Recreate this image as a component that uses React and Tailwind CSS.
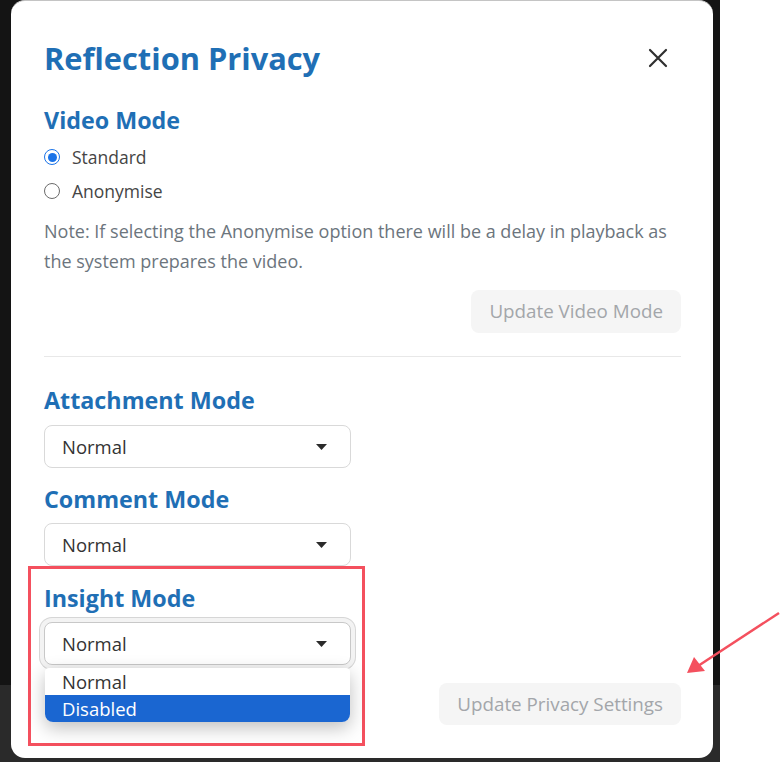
import React from 'react';

const Caret = () => (
  <svg width="11" height="6" viewBox="0 0 11 6" className="shrink-0">
    <path d="M0 0h11L5.5 6z" fill="#2b2b2b" />
  </svg>
);

const SelectBox = ({ value, focused = false }) => (
  <div
    className={`flex h-[43px] w-[307px] items-center justify-between rounded-lg border bg-white pl-[17px] pr-[23px] text-[18.5px] text-[#333] ${
      focused
        ? 'border-[#c8c8c8] shadow-[0_0_0_4px_#f3f3f3,0_0_0_5px_#d6d6d6]'
        : 'border-[#d9d9d9]'
    }`}
  >
    <span>{value}</span>
    <Caret />
  </div>
);

const Radio = ({ checked, label }) => (
  <label className="flex h-[34px] items-center gap-[12px] text-[17.5px] text-[#454545]">
    {checked ? (
      <span className="flex h-[16px] w-[16px] items-center justify-center rounded-full border border-[#1a73e8] bg-white">
        <span className="h-[9px] w-[9px] rounded-full bg-[#1a73e8]" />
      </span>
    ) : (
      <span className="h-[16px] w-[16px] rounded-full border border-[#6b6b6b] bg-white" />
    )}
    {label}
  </label>
);

const Heading = ({ children, className = '' }) => (
  <h3 className={`h-[30px] text-[23.3px] font-bold leading-[30px] text-[#1f6fb5] ${className}`}>
    {children}
  </h3>
);

export default function App() {
  return (
    <div
      className="relative h-[762px] w-[783px] overflow-hidden bg-white"
      style={{ fontFamily: '"Open Sans", "Noto Sans", sans-serif' }}
    >
      {/* backdrop behind the modal */}
      <div className="flex h-full w-[720px] flex-col">
        <div className="h-[685px] bg-[#141414]" />
        <div className="flex-1 bg-[#2a2a2a]" />
      </div>

      {/* modal */}
      <div className="absolute left-[11px] top-0 h-[758px] w-[702px] rounded-[14px] border-t border-[#c4c4c4] bg-white pl-[33px] pr-8 pt-[39px]">
        <div className="flex h-[36px] items-center justify-between">
          <h2 className="text-[30.8px] font-bold leading-[36px] text-[#1f6fb5]">Reflection Privacy</h2>
          <svg width="20" height="20" viewBox="0 0 20 20" className="mr-[13px]">
            <path d="M2 2l16 16M18 2L2 18" stroke="#2f2f2f" strokeWidth="2.2" strokeLinecap="round" />
          </svg>
        </div>

        <Heading className="mt-[29px]">Video Mode</Heading>
        <div className="mt-[5px] flex flex-col">
          <Radio checked label="Standard" />
          <Radio label="Anonymise" />
        </div>
        <p className="mt-[8px] text-[18px] leading-[30px] text-[#6c757d]">
          Note: If selecting the Anonymise option there will be a delay in playback as the system prepares the video.
        </p>
        <div className="mt-[14px] flex justify-end">
          <button className="h-[43px] rounded-lg bg-[#f5f5f5] px-[18px] text-[18.8px] text-[#a3a6aa]">
            Update Video Mode
          </button>
        </div>
        <div className="mt-[23px] h-px bg-[#e8e8e8]" />

        <Heading className="mt-[28px]">Attachment Mode</Heading>
        <div className="mt-[10px]">
          <SelectBox value="Normal" />
        </div>

        <Heading className="mt-[16px]">Comment Mode</Heading>
        <div className="mt-[9px]">
          <SelectBox value="Normal" />
        </div>

        <Heading className="mt-[17px]">Insight Mode</Heading>
        <div className="relative mt-[9px]">
          <SelectBox value="Normal" focused />
          <ul className="absolute left-px top-[46px] z-10 w-[305px] overflow-hidden rounded-b-lg rounded-t-[4px] bg-white text-[18.5px] shadow-[0_6px_18px_rgba(0,0,0,0.25)]">
            <li className="flex h-[27px] items-center pl-[17px] text-[#333]">Normal</li>
            <li className="flex h-[27px] items-center bg-[#1a66d1] pl-[17px] text-white">Disabled</li>
          </ul>
        </div>

        <div className="mt-[18px] flex justify-end">
          <button className="h-[42px] rounded-lg bg-[#f5f5f5] px-[18px] text-[18.8px] text-[#a3a6aa]">
            Update Privacy Settings
          </button>
        </div>

        {/* annotation box */}
        <div className="pointer-events-none absolute left-[17px] top-[565px] h-[180px] w-[337px] border-[3px] border-[#f4505e]" />
      </div>

      {/* annotation arrow */}
      <svg className="pointer-events-none absolute left-[680px] top-[605px]" width="103" height="80" viewBox="0 0 103 80">
        <line x1="99" y1="8" x2="18" y2="61" stroke="#f4505e" strokeWidth="2.5" />
        <path d="M7 68L14 52L25 66z" fill="#f4505e" />
      </svg>
    </div>
  );
}
